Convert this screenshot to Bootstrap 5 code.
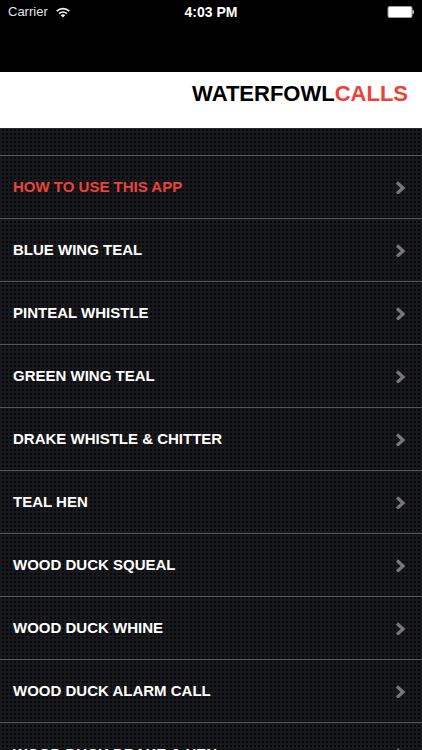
<!DOCTYPE html>
<html lang="en">
<head>
<meta charset="utf-8">
<meta name="viewport" content="width=device-width, initial-scale=1">
<title>Waterfowl Calls</title>
<link href="https://cdn.jsdelivr.net/npm/bootstrap@5.3.0/dist/css/bootstrap.min.css" rel="stylesheet">
<style>
  body { font-family: "Liberation Sans", Arial, sans-serif; background: #000; }
  .status-bar { height: 24px; font-size: 13px; color: #e4e4e4; }
  .clock { font-size: 14px; color: #fff; }
  .nav-space { height: 48px; }
  .brand-bar { height: 56px; background: #fff; }
  .brand-title { font-size: 22px; line-height: 28px; color: #000; padding: 8px 14px 0; }
  .accent, .call-row.accent, .call-row.accent:hover { color: #ea443a; }
  .calls {
    background: #18191c conic-gradient(#060608 25%, transparent 0) 0 0 / 4px 4px;
    border-top: 1px solid #2c2d30;
  }
  .spacer { height: 26px; }
  .call-row {
    height: 63px; padding: 0 16px 0 13px; font-size: 15px; line-height: 20px;
    color: #fff; border-top: 1px solid #55565a;
  }
  .call-row:hover { color: #fff; }
</style>
<script src="https://cdn.jsdelivr.net/npm/bootstrap@5.3.0/dist/js/bootstrap.bundle.min.js" defer></script>
</head>
<body class="vh-100 overflow-hidden d-flex flex-column">
<svg class="d-none" aria-hidden="true">
  <symbol id="chevron" viewBox="0 0 11 14"><path d="M2 2.5L8 8l-6 5.5" fill="none" stroke="#77777a" stroke-width="3.2"/></symbol>
</svg>
<header class="flex-shrink-0">
  <div class="status-bar row g-0 align-items-center px-2">
    <div class="col d-flex align-items-center gap-2">
      <span>Carrier</span>
      <svg width="14" height="11" viewBox="0 0 14 11" role="img" aria-label="Wi-Fi">
        <g fill="none" stroke="#f4f4f4" stroke-width="1.7"><path d="M.8 4.1a8.9 8.9 0 0 1 12.4 0"/><path d="M3.1 6.6a5.6 5.6 0 0 1 7.8 0"/></g>
        <path d="M4.8 8.3a3.2 3.2 0 0 1 4.4 0L7 10.6z" fill="#f4f4f4"/>
      </svg>
    </div>
    <div class="col-auto clock fw-bold">4:03 PM</div>
    <div class="col d-flex justify-content-end">
      <svg width="27" height="12" viewBox="0 0 27 12" role="img" aria-label="Battery full">
        <rect x="1" y=".5" width="24" height="11" rx="1.5" fill="#fff" stroke="#999"/>
        <path d="M25.5 4h1q1 2 0 4h-1z" fill="#ccc"/>
      </svg>
    </div>
  </div>
  <div class="nav-space"></div>
  <div class="brand-bar">
    <h1 class="brand-title fw-bold text-end m-0">WATERFOWL<span class="accent">CALLS</span></h1>
  </div>
</header>
<main class="calls flex-grow-1 overflow-hidden">
  <div class="spacer"></div>
  <nav aria-label="Calls">
    <a href="#" class="call-row accent d-flex align-items-center justify-content-between fw-bold text-decoration-none">HOW TO USE THIS APP<svg width="11" height="14" aria-hidden="true"><use href="#chevron"/></svg></a>
    <a href="#" class="call-row d-flex align-items-center justify-content-between fw-bold text-decoration-none">BLUE WING TEAL<svg width="11" height="14" aria-hidden="true"><use href="#chevron"/></svg></a>
    <a href="#" class="call-row d-flex align-items-center justify-content-between fw-bold text-decoration-none">PINTEAL WHISTLE<svg width="11" height="14" aria-hidden="true"><use href="#chevron"/></svg></a>
    <a href="#" class="call-row d-flex align-items-center justify-content-between fw-bold text-decoration-none">GREEN WING TEAL<svg width="11" height="14" aria-hidden="true"><use href="#chevron"/></svg></a>
    <a href="#" class="call-row d-flex align-items-center justify-content-between fw-bold text-decoration-none">DRAKE WHISTLE &amp; CHITTER<svg width="11" height="14" aria-hidden="true"><use href="#chevron"/></svg></a>
    <a href="#" class="call-row d-flex align-items-center justify-content-between fw-bold text-decoration-none">TEAL HEN<svg width="11" height="14" aria-hidden="true"><use href="#chevron"/></svg></a>
    <a href="#" class="call-row d-flex align-items-center justify-content-between fw-bold text-decoration-none">WOOD DUCK SQUEAL<svg width="11" height="14" aria-hidden="true"><use href="#chevron"/></svg></a>
    <a href="#" class="call-row d-flex align-items-center justify-content-between fw-bold text-decoration-none">WOOD DUCK WHINE<svg width="11" height="14" aria-hidden="true"><use href="#chevron"/></svg></a>
    <a href="#" class="call-row d-flex align-items-center justify-content-between fw-bold text-decoration-none">WOOD DUCK ALARM CALL<svg width="11" height="14" aria-hidden="true"><use href="#chevron"/></svg></a>
    <a href="#" class="call-row d-flex align-items-center justify-content-between fw-bold text-decoration-none">WOOD DUCK DRAKE &amp; HEN<svg width="11" height="14" aria-hidden="true"><use href="#chevron"/></svg></a>
  </nav>
</main>
</body>
</html>
